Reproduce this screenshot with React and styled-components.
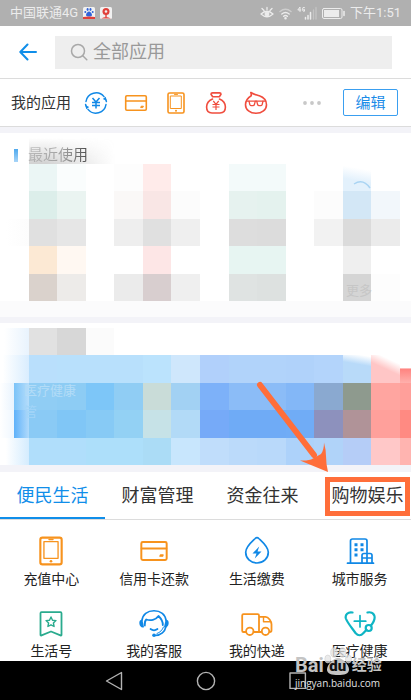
import React, { useState } from 'react';
import styled, { createGlobalStyle } from 'styled-components';

const GlobalStyle = createGlobalStyle`
  * {
    box-sizing: border-box;
  }

  body {
    margin: 0;
    background: #fff;
    font-family: Roboto, 'Noto Sans CJK SC', sans-serif;
    color: #333;
  }

  button {
    font: inherit;
    color: inherit;
    background: none;
    border: none;
    padding: 0;
    cursor: pointer;
  }
`;

const Page = styled.div`
  min-height: 100vh;
  display: flex;
  flex-direction: column;
  overflow-x: hidden;
`;

const StatusBar = styled.div`
  height: 26px;
  padding: 0 10px;
  display: flex;
  align-items: center;
  justify-content: space-between;
  background: #b0b0b0;
  color: #ececec;
  font-size: 13px;
  line-height: 20px;
`;

const StatusGroup = styled.div`
  display: flex;
  align-items: center;
  gap: ${props => props.$gap}px;
`;

const Header = styled.header`
  height: 53px;
  padding: 0 19px;
  display: flex;
  align-items: center;
  gap: 18px;
  border-bottom: 1px solid #dcdcdc;
`;

const IconButton = styled.button`
  display: flex;
`;

const SearchBox = styled.label`
  flex: 1;
  height: 33px;
  padding-left: 15px;
  display: flex;
  align-items: center;
  gap: 5px;
  background: #eee;
`;

const SearchInput = styled.input`
  flex: 1;
  min-width: 0;
  padding: 0;
  border: none;
  outline: none;
  background: transparent;
  font-family: inherit;
  font-size: 18px;
  line-height: 26px;
  color: #333;

  &::placeholder {
    color: #999;
    opacity: 1;
  }
`;

const AppsRow = styled.section`
  height: 48px;
  padding: 0 13px 0 11px;
  display: flex;
  align-items: center;
  border-bottom: 1px solid #dcdcdc;
`;

const AppsLabel = styled.h2`
  margin: 0 13px 0 0;
  font-size: 15px;
  font-weight: 400;
  line-height: 22px;
`;

const AppIcons = styled.div`
  display: flex;
  gap: 16px;
`;

const MoreButton = styled.button`
  display: flex;
  margin: 0 21px 0 auto;
`;

const EditButton = styled.button`
  width: 55px;
  height: 27px;
  border: 1px solid #3a9ff0;
  border-radius: 2px;
  color: #1b8ce8;
  font-size: 15px;
  line-height: 22px;
`;

const Band = styled.div`
  height: ${props => props.$height || 6}px;
  background: #f3f3f8;
`;

const RecentSection = styled.section`
  padding-bottom: 16px;
  background: linear-gradient(#fff 168px, #fbfbfc 168px);
`;

const RecentTitle = styled.h2`
  position: relative;
  margin: 0;
  height: 31px;
  padding: 14px 0 0 28px;
  display: flex;
  font-size: 15px;
  font-weight: 400;
  line-height: 17px;

  &::before {
    content: '';
    position: absolute;
    left: 14px;
    top: 16px;
    width: 4px;
    height: 13px;
    background: linear-gradient(#4ea9ee, #a8d5f8);
  }

  &::after {
    content: '';
    position: absolute;
    left: 29px;
    top: 5px;
    width: 86px;
    bottom: 0;
    background: linear-gradient(rgba(140, 140, 140, 0), rgba(140, 140, 140, 0.4));
    mask-image: linear-gradient(90deg, #000 20%, transparent);
  }

  span {
    color: transparent;
    background: linear-gradient(90deg, #cacaca, #a4a4a4 60%, #444);
    background-clip: text;
  }
`;

const BannerSection = styled.section`
  position: relative;
  padding-top: 5px;
`;

const MosaicGrid = styled.div`
  position: relative;
  height: 137px;
  display: grid;
  grid-template-columns: repeat(14, 13fr) 5fr;
  grid-template-rows: repeat(5, 1fr);
`;

const MosaicCell = styled.div`
  background: ${props => props.$fill || 'transparent'};
`;

const FaintText = styled.span`
  position: absolute;
  left: ${props => props.$left}px;
  top: ${props => props.$top}px;
  font-size: 13px;
  line-height: 20px;
  color: ${props => props.$tone};
`;

const FaintArc = styled.svg`
  position: absolute;
  left: 351px;
  top: 15px;
`;

const TabArea = styled.div`
  position: relative;
`;

const Tabs = styled.div`
  height: 48px;
  display: flex;
  overflow: hidden;
  border-bottom: 1px solid #dcdcdc;
`;

const Tab = styled.button`
  flex: 0 0 105px;
  font-size: 18px;
  line-height: 26px;
  color: ${props => (props.$active ? '#108ee9' : '#333')};
  box-shadow: ${props => (props.$active ? 'inset 0 -2px #108ee9' : 'none')};
`;

const Highlight = styled.div`
  position: absolute;
  top: 5px;
  right: 1px;
  width: 85px;
  height: 39px;
  border: 5px solid #ff6e3a;
  pointer-events: none;
`;

const Arrow = styled.svg`
  position: absolute;
  right: 80px;
  bottom: 48px;
  pointer-events: none;
`;

const Services = styled.div`
  padding-top: 15px;
  display: grid;
  grid-template-columns: repeat(4, 1fr);
  row-gap: 18px;
`;

const Service = styled.button`
  display: flex;
  flex-direction: column;
  align-items: center;
  gap: 2px;
  font-size: 14px;
  line-height: 20px;
  color: #222;
`;

const NavBar = styled.nav`
  position: relative;
  height: 39px;
  display: flex;
  align-items: center;
  justify-content: center;
  gap: 72px;
  background: #000;
`;

const Watermark = styled.div`
  position: absolute;
  right: 26px;
  top: -14px;
  width: 90px;
  color: #c4c4c4;
  pointer-events: none;
`;

const WatermarkLogo = styled.div`
  height: 29px;
  display: flex;
  align-items: flex-end;
  font-size: 20px;
  font-weight: 700;
  line-height: 22px;
`;

const WatermarkPaw = styled.span`
  position: relative;
  width: 28px;
  height: 29px;
  display: flex;
  align-items: flex-end;
  justify-content: center;
  color: #111;
  font-size: 15px;
  line-height: 20px;

  svg {
    position: absolute;
    inset: 0;
  }

  b {
    position: relative;
  }
`;

const WatermarkName = styled.span`
  font-size: 15px;
  line-height: 22px;
`;

const WatermarkUrl = styled.div`
  font-family: 'Open Sans', sans-serif;
  font-size: 10px;
  line-height: 14px;
  color: #e0e0e0;
`;

const ORANGE = '#f7931e';
const BLUE = '#1088e6';
const RED = '#f04d3e';

const Icon = ({ w, h = w, box, color, stroke = 1.6, children }) => (
  <svg
    width={w}
    height={h}
    viewBox={box || `0 0 ${w} ${h}`}
    fill="none"
    stroke={color}
    strokeWidth={stroke}
    strokeLinecap="round"
    strokeLinejoin="round"
    aria-hidden="true"
  >
    {children}
  </svg>
);

const TransferIcon = () => (
  <Icon w={24} color={BLUE} stroke={1.5}>
    <path d="M2 10.5A10.2 10.2 0 0 1 20 5.6M22 13.5A10.2 10.2 0 0 1 4 18.4M1.6 13.5c.3 1.2.5 2 1 3M22.4 10.5c-.3-1.2-.5-2-1-3" />
    <path d="M22.3 9.8l-.5-4-3 2.2zM1.700 14.200l.5 4 3-2.200z" fill={BLUE} stroke="none" />
    <path d="M8.500 7l3.500 4 3.500-4M8 11.500h8M8 14.500h8M12 11V17.500" strokeLinecap="butt" />
  </Icon>
);

const CardIcon = ({ size = 24, box = '0 0 24 24' }) => (
  <Icon w={size} box={box} color={ORANGE} stroke={1.6}>
    <rect x="1.7" y="4.7" width="20.6" height="14.6" rx="1.2" />
    <path d="M2 10h20" />
    <path d="M16.800 16.200l.4-1h2.200l-.4 1z" fill={ORANGE} strokeWidth="1" />
  </Icon>
);

const TabletIcon = ({ size = 24, box = '0 0 24 24' }) => (
  <Icon w={size} box={box} color={ORANGE} stroke={1.6}>
    <rect x="4" y="2" width="16" height="20" rx="1.600" />
    <path d="M6.700 5h10.600v12.500H6.700z" strokeWidth="1" />
    <path d="M10.500 3.400h3" strokeWidth="1" />
    <circle cx="12" cy="19.700" r="1" fill={ORANGE} stroke="none" />
  </Icon>
);

const MoneyBagIcon = () => (
  <Icon w={24} color={RED} stroke={1.6}>
    <path d="M8.500 5.500L7 3.200Q7 1.900 8.500 1.900h7Q17 1.900 17 3.200L15.500 5.500M8.500 5.800h7" />
    <path d="M8.500 8C5 9.500 2.600 12.500 2.600 16 2.600 20 5 22 8 22h8c3 0 5.400-2 5.400-6C21.400 12.500 19 9.500 15.500 8" />
    <path d="M9.300 10l2.700 3.300L14.700 10M8.500 13.500h7M8.500 16h7M12 13V19" strokeWidth="1.200" strokeLinecap="butt" />
  </Icon>
);

const GlassesIcon = () => (
  <Icon w={24} color={RED} stroke={1.6}>
    <path d="M7.200 4.800C7.500 3.600 7.200 2.600 6.800 1.500c2.600 2 5.500 2.300 8.500 3.300 4.300 1.500 7.200 4.500 7.200 8.900 0 5.200-4.600 8.600-10.500 8.600S1.500 18.900 1.500 13.700c0-3.700 2.200-6.700 5.700-8.900z" />
    <path d="M2.500 10.200h19" strokeWidth="1.300" />
    <path d="M5 10.200l.8 3.300q.4 1.200 1.600 1.200h1.500q1.200 0 1.500-1.200l.9-3.300M12.700 10.200l.9 3.300q.3 1.200 1.500 1.200h1.500q1.200 0 1.600-1.200l.8-3.300" strokeWidth="1.300" />
  </Icon>
);

const UtilityIcon = () => (
  <Icon w={32} color={BLUE} stroke={1.7}>
    <path d="M16 2.700q1 0 1.800.8C21.500 7 27.300 11.700 27.300 17.300 27.300 23.500 22.300 28 16 28S4.700 23.500 4.700 17.300C4.700 11.700 10.500 7 14.200 3.500q.8-.8 1.800-.8z" />
    <path d="M18.200 11.500L11.500 18.500h4L13.800 23.500l6.700-7h-4z" fill={BLUE} stroke="none" />
  </Icon>
);

const CityIcon = () => (
  <Icon w={32} color={BLUE} stroke={1.7}>
    <path d="M3.500 28.200h26M6.500 28V6Q6.500 4 8.500 4h12.500Q23 4 23 6V17.500" />
    <path d="M18 28v-7.500q0-2 2-2h6q2 0 2 2V28M18 23h10M23 18.500V28" />
    <path d="M10.500 8.300h3v3h-3zM16.500 8.300h3v3h-3zM10.500 13.300h3v3h-3zM16.500 13.300h3v3h-3zM10.500 18.500h3v3h-3z" fill={BLUE} stroke="none" />
  </Icon>
);

const BookmarkIcon = () => (
  <Icon w={32} color="#2aab8e" stroke={1.8}>
    <path d="M6.500 5.200h19Q26.500 5.200 26.500 6.200V28q0 .8-1 .4L16 24.500 6.500 28.400q-1 .4-1-.4V6.200Q5.500 5.200 6.500 5.200z" />
    <path d="M16 10l1.500 3.200 3.500.4-2.600 2.400.7 3.500-3.100-1.700-3.100 1.700.7-3.500-2.600-2.400 3.500-.4z" strokeWidth="1.400" />
  </Icon>
);

const HeadsetIcon = () => (
  <Icon w={32} color={BLUE} stroke={1.8}>
    <path d="M3.800 14C4.500 7.500 9.500 3.800 16 3.800S27.500 7.500 28.200 14" strokeWidth="1.600" />
    <path d="M3.600 13.500c-2 .6-2 5.500 1.400 6.200zM28.400 13.500c2 .6 2 5.500-1.400 6.200z" fill={BLUE} />
    <path d="M6.800 18.500c-.3-2.500 0-4.500 1.500-6 4 1.500 9.500.5 12.200-3.500 2.500 2.500 4.500 5.500 4.300 9" />
    <path d="M12.500 22q3.500 2.600 7 0" strokeWidth="1.700" />
    <path d="M28 19.500C27 24.500 23 28.500 17 28.500" strokeWidth="1.600" />
    <path d="M25.500 20C24.500 23 22 25.500 19 26.500" strokeWidth="1" />
    <circle cx="16" cy="28.300" r="1.800" fill={BLUE} stroke="none" />
  </Icon>
);

const TruckIcon = () => (
  <Icon w={32} color={ORANGE} stroke={1.8}>
    <path d="M5 25H2.500Q1.200 25 1.200 23.700V8.500Q1.200 7.200 2.500 7.200h14.200Q18 7.200 18 8.500V25H12.500M18 9.800h6.500c3 0 6 4.500 6 7.500v6q0 1.700-1.700 1.700M18 25h2.500" />
    <path d="M22.500 10v4.800h6.500" strokeWidth="1.400" />
    <circle cx="8.800" cy="24.300" r="3.700" />
    <circle cx="24.500" cy="24.300" r="3.700" />
  </Icon>
);

const HealthIcon = () => (
  <Icon w={32} color="#0fb5c4" stroke={2.2}>
    <path d="M8.500 5.500C4 4.500.8 8 1.900 11.500 3.500 16 8 21 11.500 26q4 4.500 8 0l3-3.300M27 18.500C29 16 31.500 12 30.300 8.500 29.300 6 26.500 4.700 23.500 5.500" />
    <circle cx="24.700" cy="21" r="3" />
    <path d="M16 8.500v11.500M10.300 14.200h11.500" strokeWidth="1.700" />
  </Icon>
);

const APPS = [
  { name: '转账', icon: <TransferIcon /> },
  { name: '信用卡还款', icon: <CardIcon /> },
  { name: '充值中心', icon: <TabletIcon /> },
  { name: '余额宝', icon: <MoneyBagIcon /> },
  { name: '淘票票', icon: <GlassesIcon /> }
];

const SERVICES = [
  { name: '充值中心', icon: <TabletIcon size={32} box="0 0 24 24" /> },
  { name: '信用卡还款', icon: <CardIcon size={32} box="-1 -1 26 26" /> },
  { name: '生活缴费', icon: <UtilityIcon /> },
  { name: '城市服务', icon: <CityIcon /> },
  { name: '生活号', icon: <BookmarkIcon /> },
  { name: '我的客服', icon: <HeadsetIcon /> },
  { name: '我的快递', icon: <TruckIcon /> },
  { name: '医疗健康', icon: <HealthIcon /> }
];

const TABS = ['便民生活', '财富管理', '资金往来', '购物娱乐'];

// one entry per mosaic cell, 15 columns by 5 rows, 0 is left clear
const RECENT_CELLS = [
  [0, '#ebf6f5', '#fafdfd', 0, '#fdfdfd', '#ffebea', 0, 0, '#f3fafa', '#f3fafa', 0, 0, 'linear-gradient(190deg, #fff 20%, #e3f1fc 60%)', 0, 0],
  [0, '#dceeea', '#eaf4f1', 0, '#faf8f7', '#f9e6e5', '#fcfcfc', 0, '#e6f2ef', '#e4f2ee', 0, '#fcfcfc', '#d3e7f6', '#f2f7fb', 0],
  ['linear-gradient(90deg, #fff 20%, #fcfcfc)', '#e0e0e0', '#e6e6e6', 0, '#eeeeee', '#e0e0e0', '#efefef', 0, '#dddddd', '#dcdcdc', 0, '#f2f2f2', '#dbdbdb', '#ebebeb', 0],
  [0, '#fce9d4', '#fff8f2', 0, 0, '#fde6e6', 0, 0, '#e7f5f2', '#e7f5f2', 0, 0, '#efefef', 0, 0],
  [0, '#dad2cc', '#edebe9', 0, '#ebebeb', '#d8cecf', '#efefef', 0, '#dfe3e2', '#dde1e0', 0, 0, '#d5d5d5', '#fdfdfd', 0]
];

const BANNER_CELLS = [
  ['linear-gradient(90deg, #fff 15%, #e8f3fd)', '#e1e1e1', '#d7d7d7', '#fbfbfb', 0, 0, 0, 0, 0, 0, 0, 0, 0, 0, 0],
  ['linear-gradient(90deg, #fff 10%, #d9edfe)', '#b9dffc', '#b8e0fc', '#b8e0fc', '#b8e0fc', '#bbe3fd', '#cfe7fc', '#b1d0fb', '#b1d3fa', '#b1d3fa', '#b0d2fa', '#b3d4fb', 'linear-gradient(190deg, #fff 5%, #b8daf9 35%)', 'linear-gradient(205deg, #fff 22%, #ffc6c6 50%)', 'linear-gradient(#fff 46%, #ff8480 50%, #ffb0ac)'],
  ['linear-gradient(90deg, #fff, #e9f4fe 48%, #7dc4f8 50%, #b5ddfb)', '#90cdf4', '#8dccf4', '#7dc6f8', '#90cdf4', '#c9dcd8', '#a2d1f3', '#7db1f9', '#8bbcf7', '#8bbcf7', '#83b7f7', '#8aa9d0', '#8e9a8e', '#ffa5a0', '#ff9f9a'],
  ['linear-gradient(90deg, #fff, #eff7ff 48%, #62b3fa 50%, #b0dafb)', '#8acaf5', '#80c6f6', '#87caf5', '#93d1f4', '#c6e2e7', '#b2daf7', '#76aaf8', '#6fabf6', '#6fabf6', '#70acf6', '#8d91bd', '#b09398', '#ffa09b', '#ff8a82'],
  ['linear-gradient(90deg, #fff 20%, #d4ecfe)', '#b0defb', '#b0defb', '#addffa', '#addffa', '#abdcf6', '#c8e6fd', '#c0ddfb', '#bbdafa', '#b9d9fa', '#add2fa', '#b0d3f9', '#b5cdf7', '#ffc8c8', '#ffb4b0']
];

function Mosaic({ cells, children }) {
  return (
    <MosaicGrid>
      {cells.flat().map((fill, i) => (
        <MosaicCell key={i} $fill={fill} />
      ))}
      {children}
    </MosaicGrid>
  );
}

function App() {
  const [activeTab, setActiveTab] = useState(TABS[0]);

  return (
    <Page>
      <GlobalStyle />

      <StatusBar>
        <StatusGroup $gap={5}>
          <span>中国联通4G</span>
          <svg width="12" height="12" viewBox="0 0 12 12">
            <rect width="12" height="12" rx="1.500" fill="#f1f1f1" />
            <path d="M6 4.500c1.300 0 3 2 3 3.500S7.500 9.500 6 9.500 3 9.500 3 8s1.700-3.500 3-3.500z" fill="#2f62d9" />
            <ellipse cx="4.600" cy="2.500" rx="1" ry="1.400" fill="#2f62d9" />
            <ellipse cx="7.500" cy="2.500" rx="1" ry="1.400" fill="#2f62d9" />
            <circle cx="2.300" cy="5" r="1" fill="#2f62d9" />
            <circle cx="9.700" cy="5" r="1" fill="#2f62d9" />
            <path d="M0 10q6 -1 12 0v2H0z" fill="#e0403a" />
          </svg>
          <svg width="12" height="12" viewBox="0 0 12 12">
            <rect width="12" height="12" rx="1.500" fill="#f1f1f1" />
            <circle cx="6" cy="4.500" r="3.500" fill="#e0403a" />
            <path d="M5.300 7h1.400v3H5.300z" fill="#e0403a" />
            <circle cx="6" cy="4.500" r="1.300" fill="#f1f1f1" />
            <path d="M1 11.500q5-3 10 0z" fill="#e0403a" />
          </svg>
        </StatusGroup>
        <StatusGroup $gap={5}>
          <Icon w={14} color="#ececec" stroke={1.3}>
            <path d="M1 8q6-5.500 12 0-6 5.500-12 0zM2 2.500l2 2M12 2.500l-2 2M7 1.500v2" />
            <circle cx="7" cy="8" r="1.800" fill="#ececec" />
          </Icon>
          <Icon w={13} color="#ececec" stroke={1.4}>
            <path d="M1 4.500q5.500-4.500 11 0" opacity=".5" />
            <path d="M2.800 7q3.700-3 7.400 0M4.600 9.300q1.900-1.500 3.800 0" />
            <circle cx="6.500" cy="11.300" r=".6" fill="#ececec" />
          </Icon>
          <Icon w={20} h={14} color="#ececec" stroke={1}>
            <path d="M3 5.500V1L.8 4h3M7.500 1.500q-2-1-2 1.700t2 2V3.500H6.700" />
            <path d="M8.500 13v-1.500M11 13V9.500M13.500 13V6.500" strokeWidth="1.500" />
            <path d="M16.500 13V4M19 13V1.500" strokeWidth="1.300" opacity=".35" />
          </Icon>
          <Icon w={23} h={11} color="#ececec" stroke={1}>
            <rect x=".5" y=".5" width="19.500" height="10" rx="1.500" />
            <rect x="2" y="2" width="15" height="7" fill="#ececec" stroke="none" />
            <path d="M22 3.500v4" strokeWidth="1.500" />
          </Icon>
          <span>下午1:51</span>
        </StatusGroup>
      </StatusBar>

      <Header>
        <IconButton aria-label="返回">
          <Icon w={18} color="#108ee9" stroke={2}>
            <path d="M17 9H1.500M8.500 1.500L1.300 9l7.200 7.500" />
          </Icon>
        </IconButton>
        <SearchBox>
          <Icon w={18} color="#a8a8a8" stroke={1.5}>
            <circle cx="8" cy="8" r="6.500" />
            <path d="M12.800 12.800l4 4" />
          </Icon>
          <SearchInput type="text" placeholder="全部应用" aria-label="全部应用" />
        </SearchBox>
      </Header>

      <AppsRow>
        <AppsLabel>我的应用</AppsLabel>
        <AppIcons>
          {APPS.map(app => (
            <IconButton key={app.name} aria-label={app.name}>
              {app.icon}
            </IconButton>
          ))}
        </AppIcons>
        <MoreButton aria-label="更多">
          <svg width="20" height="4" viewBox="0 0 20 4" fill="#c8c8c8">
            <circle cx="3" cy="2" r="1.900" />
            <circle cx="10" cy="2" r="1.900" />
            <circle cx="17" cy="2" r="1.900" />
          </svg>
        </MoreButton>
        <EditButton>编辑</EditButton>
      </AppsRow>

      <Band />
      <RecentSection>
        <RecentTitle>
          <span>最近使用</span>
        </RecentTitle>
        <Mosaic cells={RECENT_CELLS}>
          <FaintArc width="22" height="12" viewBox="0 0 22 12" fill="none" stroke="#a9d4f3" strokeWidth="1.500">
            <path d="M3 5q9-6 16 4" />
          </FaintArc>
          <FaintText $left={346} $top={117} $tone="#c6c6c6">更多</FaintText>
        </Mosaic>
      </RecentSection>

      <Band />
      <BannerSection>
        <Mosaic cells={BANNER_CELLS}>
          <FaintText $left={24} $top={53} $tone="#b3dcf7">医疗健康</FaintText>
          <FaintText $left={24} $top={74} $tone="#a3d5f8">管</FaintText>
        </Mosaic>
      </BannerSection>
      <Band $height={7} />

      <TabArea>
        <Tabs role="tablist">
          {TABS.map(tab => (
            <Tab
              key={tab}
              role="tab"
              aria-selected={tab === activeTab}
              $active={tab === activeTab}
              onClick={() => setActiveTab(tab)}
            >
              {tab}
            </Tab>
          ))}
        </Tabs>
        <Highlight />
        <Arrow width="76" height="94" viewBox="0 0 76 94">
          <path d="M5 7L59 77" stroke="#ff6e3a" strokeWidth="6" strokeLinecap="round" />
          <path d="M73 94L45 82.500Q54 83 58 80.500L66 76Q69 72 69 64.500 71 72 71 78 71 86 73 94z" fill="#ff6e3a" />
        </Arrow>
      </TabArea>

      <Services>
        {SERVICES.map(service => (
          <Service key={service.name}>
            {service.icon}
            {service.name}
          </Service>
        ))}
      </Services>

      <NavBar>
        <IconButton aria-label="返回">
          <Icon w={20} color="#b4b4b4" stroke={1.4}>
            <path d="M17.500 1.500v17L2.500 10z" />
          </Icon>
        </IconButton>
        <IconButton aria-label="主页">
          <Icon w={20} color="#b4b4b4" stroke={1.4}>
            <circle cx="10" cy="10" r="8.600" />
          </Icon>
        </IconButton>
        <IconButton aria-label="最近任务">
          <Icon w={20} color="#b4b4b4" stroke={1.4}>
            <rect x="2" y="2" width="15.400" height="15.400" />
          </Icon>
        </IconButton>
        <Watermark>
          <WatermarkLogo>
            Bai
            <WatermarkPaw>
              <svg width="28" height="29" viewBox="0 0 28 29">
                <path d="M14 11c5 0 11 7 11 11.500s-5 5.500-11 5.500-11-1-11-5.500 6-11.500 11-11.500z" fill="#c4c4c4" />
                <g fill="#e4e4e4" fillOpacity=".75" stroke="#cfcfcf" strokeWidth=".6">
                  <ellipse cx="10" cy="5.500" rx="3.300" ry="4.700" />
                  <ellipse cx="18.500" cy="5.500" rx="3.300" ry="4.700" />
                  <ellipse cx="3.800" cy="12" rx="3" ry="4" />
                  <ellipse cx="24.500" cy="12" rx="3" ry="4" />
                </g>
              </svg>
              <b>du</b>
            </WatermarkPaw>
            <WatermarkName>经验</WatermarkName>
          </WatermarkLogo>
          <WatermarkUrl>jingyan.baidu.com</WatermarkUrl>
        </Watermark>
      </NavBar>
    </Page>
  );
}

export default App;
